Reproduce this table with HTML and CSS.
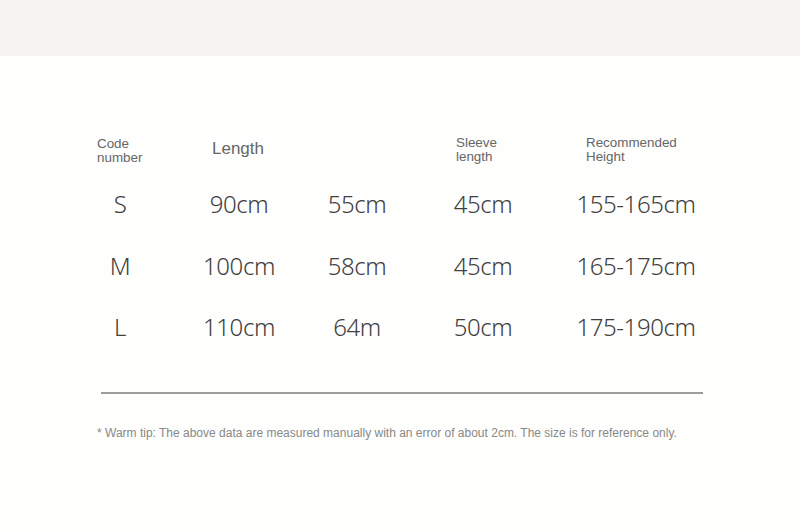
FILE: index.html
```html
<!DOCTYPE html>
<html>
<head>
<meta charset="utf-8">
<link rel="stylesheet" href="styles.css">
</head>
<body>
<div class="band"></div>
<main class="content">
  <div class="table">
    <div class="head head-code"><span>Code<br>number</span></div>
    <div class="head head-length"><span class="big">Length</span></div>
    <div class="head"><span></span></div>
    <div class="head head-sleeve"><span>Sleeve<br>length</span></div>
    <div class="head head-height"><span>Recommended<br>Height</span></div>

    <div class="cell">S</div>
    <div class="cell">90cm</div>
    <div class="cell">55cm</div>
    <div class="cell">45cm</div>
    <div class="cell">155-165cm</div>

    <div class="cell">M</div>
    <div class="cell">100cm</div>
    <div class="cell">58cm</div>
    <div class="cell">45cm</div>
    <div class="cell">165-175cm</div>

    <div class="cell">L</div>
    <div class="cell">110cm</div>
    <div class="cell">64m</div>
    <div class="cell">50cm</div>
    <div class="cell">175-190cm</div>
  </div>
  <hr class="rule">
  <p class="tip">* Warm tip: The above data are measured manually with an error of about 2cm. The size is for reference only.</p>
</main>
</body>
</html>
```

FILE: styles.css
```css
html, body {
  margin: 0;
  padding: 0;
  background: #fefefd;
}
body {
  width: 800px;
  height: 532px;
  overflow: hidden;
  font-family: "Liberation Sans", Arial, sans-serif;
}
.band {
  height: 56px;
  background: #f5f4f2;
}
.content {
  padding-top: 69px;
}
.table {
  margin-left: 60px;
  display: grid;
  grid-template-columns: 120px 118px 118px 134px 172px;
  grid-template-rows: 48px 61px 62px 61px;
}
.head {
  display: flex;
  align-items: center;
  justify-content: flex-start;
  color: #666;
  font-size: 13.4px;
  line-height: 14px;
}
.head-code { padding-left: 37px; padding-top: 3px; }
.head-length { padding-left: 32px; }
.head-sleeve { padding-left: 40px; padding-top: 2px; }
.head-height { padding-left: 36px; padding-top: 2px; }
.head .big {
  font-size: 17px;
  line-height: 18px;
}
.cell {
  display: flex;
  align-items: center;
  justify-content: center;
  font-family: "Noto Sans", sans-serif;
  font-weight: 300;
  font-size: 24px;
  color: #404040;
  letter-spacing: -0.4px;
}
.rule {
  margin: 35px 0 0 101px;
  width: 602px;
  height: 2px;
  border: 0;
  background: #9c9c9c;
}
.tip {
  margin: 32px 0 0 97px;
  font-size: 12px;
  color: #888;
}
```
